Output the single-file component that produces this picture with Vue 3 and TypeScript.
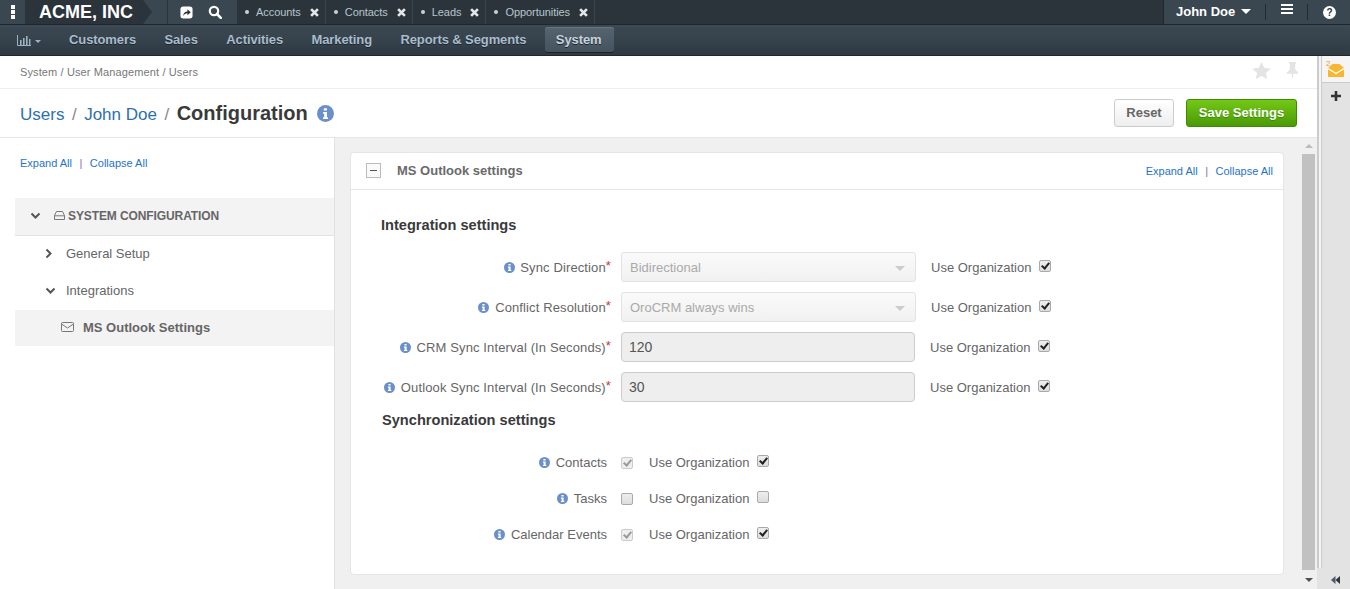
<script setup lang="ts">
interface Tab { name: string }
const tabs: Tab[] = [{ name: 'Accounts' }, { name: 'Contacts' }, { name: 'Leads' }, { name: 'Opportunities' }]
const navItems = ['Customers', 'Sales', 'Activities', 'Marketing', 'Reports & Segments']
const selectRows = [
  { label: 'Sync Direction', value: 'Bidirectional' },
  { label: 'Conflict Resolution', value: 'OroCRM always wins' },
]
const inputRows = [
  { label: 'CRM Sync Interval (In Seconds)', value: '120' },
  { label: 'Outlook Sync Interval (In Seconds)', value: '30' },
]
const syncRows = [
  { label: 'Contacts', on: true, org: true },
  { label: 'Tasks', on: false, org: false },
  { label: 'Calendar Events', on: true, org: true },
]
</script>

<template>
  <div class="app">
    <header class="topbar">
      <div class="dots"><i></i><i></i><i></i></div>
      <div class="logo">ACME, INC</div>
      <div class="logo-tail"></div>
      <div class="q-gap"></div>
      <div class="quick">
        <svg viewBox="0 0 14 14" width="13" height="13"><rect x="0.5" y="0.5" width="13" height="13" rx="3" fill="#fff"/><path d="M3.500 11c0-3.400 1.700-5.200 4.500-5.200V3.400l3.600 3.300L8 10V7.800c-2 0-3.400.9-4.500 3.200z" fill="#2b343c"/></svg>
        <svg viewBox="0 0 14 14" width="14" height="14"><circle cx="6" cy="6" r="4.200" fill="none" stroke="#fff" stroke-width="2.200"/><path d="M9 9l3.800 3.800" stroke="#fff" stroke-width="2.600" stroke-linecap="round"/></svg>
      </div>
      <div v-for="t in tabs" :key="t.name" class="tab">
        <span class="bullet"></span><span class="tab-name">{{ t.name }}</span>
        <svg viewBox="0 0 8 8" width="9" height="9"><path d="M1 1l6 6M7 1L1 7" stroke="#e4e7ea" stroke-width="2.400"/></svg>
      </div>
      <div class="spacer"></div>
      <div class="user">John Doe <span class="caret-w"></span></div>
      <div class="burger"><i></i><i></i><i></i></div>
      <div class="help">
        <svg viewBox="0 0 13 13" width="13" height="13"><circle cx="6.500" cy="6.500" r="6.500" fill="#fff"/><text x="6.500" y="10.200" text-anchor="middle" class="q">?</text></svg>
      </div>
    </header>

    <nav class="navbar">
      <div class="chart">
        <svg viewBox="0 0 14 11" width="14" height="11"><path d="M.5 0v10.500H14" fill="none" stroke="#9fb2c2"/><path d="M3 5h1.600v5H3zM6 3h1.600v7H6zM9 1h1.600v9H9zM12 4h1.400v6H12z" fill="#9fb2c2"/></svg>
        <span class="caret-n"></span>
      </div>
      <a v-for="n in navItems" :key="n" class="nav-item">{{ n }}</a>
      <a class="nav-item active">System</a>
    </nav>

    <div class="body">
      <div class="main">
        <div class="crumbs">
          <span class="crumb-text">System / User Management / Users</span>
          <div class="crumb-icons">
            <svg viewBox="0 0 20 19" width="19" height="18"><path d="M10 0l2.900 6.200 6.800.8-5 4.600 1.400 6.700-6.100-3.400-6.100 3.400 1.400-6.700-5-4.600 6.800-.8z" fill="#e4e4e4"/></svg>
            <svg viewBox="0 0 14 20" width="13" height="18"><path d="M3 0h8v1.500l-1 .8v6l3.200 3v1.700H8l-1 7-1-7H.8v-1.700L4 8.300v-6l-1-.8z" fill="#e4e4e4"/></svg>
          </div>
        </div>
        <div class="titlebar">
          <h1 class="title">
            <a>Users</a><span class="sl">/</span><a>John Doe</a><span class="sl">/</span><b>Configuration</b>
            <svg class="info big" viewBox="0 0 14 14" width="17" height="17"><circle cx="7" cy="7" r="7" fill="#6a8fcb"/><path d="M5.600 2.600h2.600v2H5.600zM5 5.800h3.200v4.200h.9v1.500H5V10h.9V7.300H5z" fill="#fff"/></svg>
          </h1>
          <div class="actions">
            <button class="btn-reset">Reset</button>
            <button class="btn-save">Save Settings</button>
          </div>
        </div>
        <div class="workspace">
          <aside class="tree">
            <div class="links tree-links"><a>Expand All</a><span class="pipe">|</span><a>Collapse All</a></div>
            <div class="sys">
              <svg class="chev" viewBox="0 0 10 8" width="11" height="8"><path d="M1 1.500l4 4 4-4" fill="none" stroke="#555" stroke-width="2"/></svg>
              <svg class="disk" viewBox="0 0 11 9" width="11" height="9"><path d="M2.500.5h6l2 4v4h-10v-4zM.5 4.800h10" fill="none" stroke="#777"/></svg>
              <span>SYSTEM CONFIGURATION</span>
            </div>
            <div class="node">
              <span class="node-ic"><svg viewBox="0 0 8 10" width="8" height="11"><path d="M1.500 1l4 4-4 4" fill="none" stroke="#555" stroke-width="2"/></svg></span>
              <span>General Setup</span>
            </div>
            <div class="node">
              <span class="node-ic"><svg viewBox="0 0 10 8" width="11" height="8"><path d="M1 1.500l4 4 4-4" fill="none" stroke="#555" stroke-width="2"/></svg></span>
              <span>Integrations</span>
            </div>
            <div class="leaf">
              <svg viewBox="0 0 13 10" width="13" height="10"><rect x=".5" y=".5" width="12" height="9" rx="1" fill="none" stroke="#777"/><path d="M.5 2l6 4 6-4" fill="none" stroke="#777"/></svg>
              <span>MS Outlook Settings</span>
            </div>
          </aside>
          <section class="content">
            <div class="card">
              <div class="card-head">
                <span class="minus"></span>
                <span class="card-title">MS Outlook settings</span>
                <div class="links head-links"><a>Expand All</a><span class="pipe">|</span><a>Collapse All</a></div>
              </div>
              <div class="card-body">
                <h3 class="h-int">Integration settings</h3>
                <div v-for="r in selectRows" :key="r.label" class="row">
                  <label class="lab">
                    <svg class="info" viewBox="0 0 14 14" width="11" height="11"><circle cx="7" cy="7" r="7" fill="#6a8fcb"/><path d="M5.600 2.400h2.800v2.100H5.600zM5 5.800h3.400v4.300h.9v1.500H5V10.100h.9V7.300H5z" fill="#fff"/></svg>
                    {{ r.label }}<em>*</em>
                  </label>
                  <div class="select">{{ r.value }}<span class="sel-caret"></span></div>
                  <span class="org">Use Organization</span>
                  <span class="cb checked"></span>
                </div>
                <div v-for="r in inputRows" :key="r.label" class="row">
                  <label class="lab">
                    <svg class="info" viewBox="0 0 14 14" width="11" height="11"><circle cx="7" cy="7" r="7" fill="#6a8fcb"/><path d="M5.600 2.400h2.800v2.100H5.600zM5 5.800h3.400v4.300h.9v1.500H5V10.100h.9V7.300H5z" fill="#fff"/></svg>
                    {{ r.label }}<em>*</em>
                  </label>
                  <div class="input">{{ r.value }}</div>
                  <span class="org">Use Organization</span>
                  <span class="cb checked"></span>
                </div>
                <h3 class="h-sync">Synchronization settings</h3>
                <div v-for="r in syncRows" :key="r.label" class="row sync-row">
                  <label class="lab lab-s">
                    <svg class="info" viewBox="0 0 14 14" width="11" height="11"><circle cx="7" cy="7" r="7" fill="#6a8fcb"/><path d="M5.600 2.400h2.800v2.100H5.600zM5 5.800h3.400v4.300h.9v1.500H5V10.100h.9V7.300H5z" fill="#fff"/></svg>
                    {{ r.label }}
                  </label>
                  <span class="cb cb-main" :class="{ dis: r.on }"></span>
                  <span class="org org-s">Use Organization</span>
                  <span class="cb" :class="{ checked: r.org }"></span>
                </div>
              </div>
            </div>
            <div class="scroll">
              <span class="sc-up"></span>
              <span class="sc-thumb"></span>
              <span class="sc-down"></span>
            </div>
          </section>
        </div>
      </div>
      <aside class="side">
        <div class="side-top">
          <div class="side-col">
            <div class="mail">
              <span class="mail-n">2</span>
              <svg viewBox="0 0 16 13" width="16" height="13"><path d="M4.500 0h7L16 4v9H0V4z" fill="#f7b731"/><path d="M0 4.500l8 5 8-5" fill="none" stroke="#fff" stroke-width="1.300"/></svg>
            </div>
            <div class="plus">
              <svg viewBox="0 0 10 10" width="10" height="10"><path d="M5 0v10M0 5h10" stroke="#333" stroke-width="2.600"/></svg>
            </div>
          </div>
        </div>
        <div class="side-foot">
          <svg viewBox="0 0 9 8" width="9" height="8"><path d="M4.500 0v8L0 4z" fill="#4b5a68"/><path d="M9 0v8L4.500 4z" fill="#333"/></svg>
        </div>
      </aside>
    </div>
  </div>
</template>

<style>
html, body { margin: 0; height: 100%; overflow: hidden; }
</style>

<style scoped>
.app { width: 1350px; height: 589px; display: flex; flex-direction: column; font-family: "Liberation Sans", Arial, sans-serif; font-size: 13px; color: #666; background: #fff; overflow: hidden; }
a { color: inherit; text-decoration: none; }

.topbar { height: 24px; flex: none; display: flex; align-items: stretch; background: #2b343b; border-bottom: 1px solid #1f272d; }
.dots { width: 25px; flex: none; display: flex; flex-direction: column; gap: 1px; align-items: center; justify-content: center; background: #3a4650; }
.dots i { width: 4px; height: 4px; background: #fff; display: block; }
.logo { width: 118px; flex: none; padding-left: 14px; box-sizing: border-box; background: #2b343b; color: #fff; font-weight: 700; font-size: 18px; line-height: 24px; white-space: nowrap; }
.logo-tail { width: 0; height: 0; flex: none; border-top: 12px solid #3a4650; border-bottom: 12px solid #3a4650; border-left: 9px solid #2b343b; }
.q-gap { width: 16px; flex: none; background: #3a4650; border-right: 1px solid #2b343b; box-sizing: border-box; }
.quick { width: 69px; flex: none; box-sizing: border-box; padding-left: 12px; display: flex; align-items: center; gap: 15px; background: #3a4650; }
.tab { display: flex; align-items: center; height: 24px; padding: 0 7px 0 8px; border-right: 1px solid #3a454e; color: #b8c4cd; font-size: 11px; background: #2b343b; }
.bullet { width: 4px; height: 4px; border-radius: 50%; background: #c9d1d7; margin-right: 7px; }
.tab-name { margin-right: 9px; letter-spacing: -0.06px; }
.tab svg { margin-right: -1px; }
.spacer { flex: 1; }
.user { width: 103px; flex: none; box-sizing: border-box; padding-left: 12px; border-left: 1px solid #1f272d; color: #fff; font-weight: 700; font-size: 13px; line-height: 23px; background: #3a4650; position: relative; }
.user::after { content: ""; position: absolute; right: 0; top: 4px; height: 16px; width: 1px; background: #222b31; }
.caret-w { display: inline-block; width: 0; height: 0; border-left: 5px solid transparent; border-right: 5px solid transparent; border-top: 5px solid #fff; margin-left: 2px; vertical-align: 2px; }
.burger { width: 42px; flex: none; display: flex; flex-direction: column; align-items: center; gap: 2px; padding-top: 4px; box-sizing: border-box; background: #3a4650; position: relative; }
.burger::after { content: ""; position: absolute; right: 0; top: 4px; height: 16px; width: 1px; background: #222b31; }
.burger i { width: 12px; height: 2px; background: #fff; display: block; }
.help { width: 42px; flex: none; box-sizing: border-box; display: flex; align-items: center; justify-content: center; background: #3a4650; padding-left: 1px; }
.q { font: 700 10px "Liberation Sans", sans-serif; fill: #2b343b; }

.navbar { height: 31px; flex: none; display: flex; align-items: center; background: linear-gradient(#3c4954, #2f3a43); border-bottom: 1px solid #20282e; box-sizing: border-box; padding-left: 14px; }
.chart { width: 55px; flex: none; display: flex; align-items: center; gap: 4px; padding-left: 3px; box-sizing: border-box; }
.caret-n { width: 0; height: 0; border-left: 3.500px solid transparent; border-right: 3.500px solid transparent; border-top: 3.500px solid #9fb2c2; margin-top: 2px; }
.nav-item { color: #a9bccb; font-weight: 700; font-size: 13px; margin-right: 28.400px; padding-bottom: 2px; letter-spacing: -0.1px; text-shadow: 0 1px 0 #1e262c; white-space: nowrap; }
.nav-item.active { margin-left: -10px; margin-right: 0; padding: 0 12px 0 11px; height: 25px; line-height: 25px; margin-bottom: 1px; border-radius: 3px; background: linear-gradient(#56646f, #45535e); box-shadow: 0 1px 0 #1b2228, inset 0 1px 0 #67757f; box-sizing: border-box; color: #c7d3dc; }

.body { flex: 1; min-height: 0; display: flex; }
.main { width: 1317px; flex: none; display: flex; flex-direction: column; min-height: 0; }
.crumbs { height: 33px; flex: none; box-sizing: border-box; display: flex; align-items: center; justify-content: space-between; padding: 0 18px 0 20px; font-size: 11px; color: #777; border-bottom: 1px solid #eee; }
.crumb-text { letter-spacing: 0.12px; }
.crumb-icons { display: flex; align-items: center; gap: 15px; margin-top: -3px; }
.titlebar { height: 49px; flex: none; box-sizing: border-box; display: flex; align-items: center; justify-content: space-between; padding: 0 20px; border-bottom: 1px solid #e7e7e7; }
.title { margin: 0; font-size: 17px; font-weight: 400; color: #2e6fb0; display: flex; align-items: baseline; }
.title b { font-size: 20px; color: #3a3a3a; font-weight: 700; }
.sl { color: #888; margin: 0 7.500px; }
.info.big { margin-left: 9px; align-self: center; }
.actions { display: flex; gap: 12px; }
.btn-reset { width: 60px; height: 28px; border: 1px solid #ccc; border-radius: 3px; background: linear-gradient(#fff, #eee); color: #666; font: 700 13px "Liberation Sans", sans-serif; padding: 0 0 2px; }
.btn-save { width: 111px; height: 28px; border: 1px solid #3e8a07; border-radius: 3px; background: linear-gradient(#74c816, #4a9a06); color: #fff; font: 700 13px "Liberation Sans", sans-serif; padding: 0 0 2px; text-shadow: 0 1px 0 #3e8a07; }

.workspace { flex: 1; min-height: 0; display: flex; }
.tree { width: 335px; flex: none; box-sizing: border-box; background: #fff; border-right: 1px solid #e2e2e2; padding: 19px 0 0 15px; }
.links { font-size: 11px; color: #1f74c9; display: flex; }
.tree-links { padding-left: 5px; }
.tree-links .pipe { margin: 0 7.500px; }
.pipe { color: #7a6fc0; margin: 0 7.500px; }
.sys { height: 38px; margin-top: 29px; background: #f3f3f3; border-bottom: 1px solid #e2e2e2; display: flex; align-items: center; padding: 0 0 2px 15px; box-sizing: border-box; font-size: 12px; font-weight: 700; color: #666; letter-spacing: -0.1px; }
.chev { margin-right: 13px; }
.disk { margin-right: 3px; }
.node { height: 37px; display: flex; align-items: center; padding: 0 0 2px 30px; box-sizing: border-box; color: #666; font-size: 13px; }
.node-ic { width: 21px; display: flex; align-items: center; flex: none; }
.leaf { height: 36px; background: #f3f3f3; display: flex; align-items: center; padding: 0 0 2px 46px; box-sizing: border-box; gap: 9px; font-weight: 700; color: #666; }

.content { flex: 1; position: relative; background: #f0f0f0; padding: 14px 33px 0 15px; box-sizing: border-box; min-width: 0; }
.card { height: 423px; background: #fff; border: 1px solid #e5e5e5; border-radius: 4px; box-sizing: border-box; }
.card-head { height: 37px; display: flex; align-items: center; padding: 0 10px 1px 15px; border-bottom: 1px solid #e7e7e7; box-sizing: border-box; }
.minus { width: 15px; height: 15px; box-sizing: border-box; border: 1px solid #bbb; position: relative; margin-right: 16px; background: #fafafa; }
.minus::after { content: ""; position: absolute; left: 3px; right: 3px; top: 6px; height: 1px; background: #555; }
.card-title { font-weight: 700; color: #6a6a6a; font-size: 13px; flex: 1; }
h3 { margin: 0; font-size: 14.600px; font-weight: 700; color: #3a3a3a; line-height: 20px; }
.h-int { padding: 25px 0 0 30px; height: 57px; box-sizing: border-box; }
.h-sync { padding: 3px 0 0 31px; height: 37px; box-sizing: border-box; }
.row { display: flex; align-items: center; height: 40px; }
.lab { width: 260px; flex: none; text-align: right; color: #666; white-space: nowrap; letter-spacing: 0.12px; }
.lab em { color: #c33; font-style: normal; position: relative; top: -2px; }
.lab .info { vertical-align: -1px; margin-right: 2px; }
.select { width: 295px; height: 30px; margin-left: 10px; box-sizing: border-box; border: 1px solid #e3e3e3; border-radius: 3px; background: linear-gradient(#fafafa, #f1f1f1); color: #aaa; line-height: 29px; padding-left: 8px; position: relative; }
.sel-caret { position: absolute; right: 10px; top: 13px; width: 0; height: 0; border-left: 5px solid transparent; border-right: 5px solid transparent; border-top: 5px solid #ccc; }
.input { width: 294px; height: 30px; margin-left: 10px; box-sizing: border-box; border: 1px solid #ccc; border-radius: 4px; background: #eee; color: #555; line-height: 28px; padding-left: 7px; font-size: 14px; }
.org { margin-left: 15px; margin-right: 8px; color: #666; }
.cb { width: 12px; height: 12px; box-sizing: border-box; border: 1px solid #aaa; border-radius: 2px; background: linear-gradient(#eee, #ddd); position: relative; display: block; margin-top: -2px; }
.cb.checked::after { content: ""; position: absolute; left: 3px; top: 0; width: 3px; height: 6px; border: solid #222; border-width: 0 2px 2px 0; transform: rotate(40deg); }
.sync-row { height: 36px; }
.lab-s { width: 256px; letter-spacing: 0; }
.cb-main { margin-left: 14px; margin-top: 2px; }
.cb-main.dis::after { content: ""; position: absolute; left: 3px; top: 0; width: 3px; height: 6px; border: solid #999; border-width: 0 2px 2px 0; transform: rotate(40deg); }
.cb-main.dis { border-color: #ccc; background: #eee; }
.org-s { margin-left: 16px; }

.scroll { position: absolute; right: 2px; top: 0; bottom: 0; width: 13px; display: flex; flex-direction: column; align-items: center; }
.sc-up { margin-top: 6px; width: 0; height: 0; border-left: 4px solid transparent; border-right: 4px solid transparent; border-bottom: 4px solid #bbb; }
.sc-thumb { width: 13px; height: 416px; margin-top: 6px; background: #c1c1c1; }
.sc-down { margin-top: 8px; width: 0; height: 0; border-left: 4px solid transparent; border-right: 4px solid transparent; border-top: 4px solid #505050; }

.side { width: 33px; flex: none; display: flex; flex-direction: column; background: #f0f0f0; }
.side-top { flex: 1; min-height: 0; display: flex; border-left: 2px solid #ccc; background: #f5f5f5; padding-left: 2px; }
.side-col { flex: 1; background: #e3e3e3; border-left: 1px solid #ccc; }
.mail { height: 27px; background: #f5f5f5; border-bottom: 1px solid #ccc; display: flex; align-items: center; justify-content: center; position: relative; box-sizing: border-box; padding-top: 2px; }
.mail-n { position: absolute; left: 4px; top: 3px; font-size: 8px; color: #e9a21a; }
.plus { height: 26px; display: flex; align-items: center; justify-content: center; }
.side-foot { height: 21px; flex: none; background: #e3e3e3; display: flex; align-items: center; justify-content: center; padding-left: 4px; box-sizing: border-box; padding-top: 3px; }
</style>
